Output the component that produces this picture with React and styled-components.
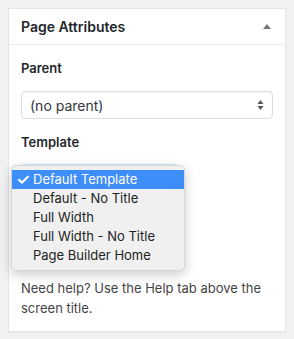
import React from 'react'
import styled, { createGlobalStyle } from 'styled-components'

const Global = createGlobalStyle`
    body {
        margin: 0;
        background: #f1f1f1;
        font-family: 'Inter', 'Liberation Sans', sans-serif;
        color: #23282d;
    }
`;

const Page = styled.div`
    padding: 8px;
    width: 294px;
    height: 339px;
    box-sizing: border-box;
`;

const Box = styled.div`
    background: #fff;
    border: 1px solid #e5e5e5;
    box-shadow: 0 1px 1px rgba(0, 0, 0, 0.04);
    width: 278px;
    box-sizing: border-box;
`;

const Header = styled.div`
    height: 35px;
    display: flex;
    align-items: center;
    justify-content: space-between;
    padding: 0 12px;
    border-bottom: 1px solid #eee;
`;

const Title = styled.h2`
    margin: 0;
    font-size: 14px;
    font-weight: 600;
    color: #23282d;
`;

const Toggle = styled.span`
    width: 0;
    height: 0;
    border-left: 4px solid transparent;
    border-right: 4px solid transparent;
    border-bottom: 5px solid #72777c;
    margin-right: 2px;
`;

const Inside = styled.div`
    padding: 10px 12px 13px;
`;

const Label = styled.p`
    margin: ${p => p.$top}px 0 0;
    font-size: 13px;
    font-weight: 600;
    line-height: 20px;
    color: #23282d;
`;

const Select = styled.div`
    position: relative;
    margin-top: 13px;
    width: ${p => p.$width || 'auto'};
    height: 28px;
    box-sizing: border-box;
    border: 1px solid ${p => p.$focus ? '#5b9dd9' : '#ddd'};
    box-shadow: ${p => p.$focus ? '0 0 2px rgba(30,140,190,.8)' : 'inset 0 1px 2px rgba(0,0,0,.04)'};
    border-radius: 4px;
    display: flex;
    align-items: center;
    padding: 0 8px;
    font-size: 14px;
    color: #32373c;
`;

const Arrows = styled.svg`
    margin-left: auto;
`;

const Menu = styled.ul`
    position: absolute;
    left: -11px;
    top: -1px;
    width: 172px;
    margin: 0;
    padding: 4px 0 5px;
    list-style: none;
    background: #f0f0f0;
    border: 1px solid #d6d6d6;
    border-radius: 5px;
    box-shadow: 0 4px 12px rgba(0, 0, 0, 0.2);
    z-index: 2;
    font-size: 13px;
`;

const Option = styled.li`
    height: 19px;
    line-height: 19px;
    padding-left: 21px;
    position: relative;
    color: ${p => p.$selected ? '#fff' : '#222'};
    background: ${p => p.$selected ? '#3d8ef8' : 'transparent'};
`;

const Check = styled.span`
    position: absolute;
    left: 4px;
    top: 0;
    font-size: 16px;
    font-weight: 600;
`;

const Help = styled.p`
    margin: 85px 0 0;
    font-size: 13px;
    line-height: 20px;
    color: #444;
`;

const options = ['Default Template', 'Default - No Title', 'Full Width', 'Full Width - No Title', 'Page Builder Home'];

export default function App() {
    return (
        <Page>
            <Global />
            <Box>
                <Header>
                    <Title>Page Attributes</Title>
                    <Toggle />
                </Header>
                <Inside>
                    <Label $top={3}>Parent</Label>
                    <Select>
                        (no parent)
                        <Arrows width="7" height="12" viewBox="0 0 7 12">
                            <path d="M3.5 1 L6.5 5 L0.5 5 Z" fill="#555" />
                            <path d="M3.5 11 L6.5 7 L0.5 7 Z" fill="#555" />
                        </Arrows>
                    </Select>
                    <Label $top={13}>Template</Label>
                    <Select $focus $width="156px">
                        <Menu>
                            {options.map((o, i) => (
                                <Option key={o} $selected={i === 0}>
                                    {i === 0 && <Check>✓</Check>}
                                    {o}
                                </Option>
                            ))}
                        </Menu>
                    </Select>
                    <Help>Need help? Use the Help tab above the screen title.</Help>
                </Inside>
            </Box>
        </Page>
    )
}
